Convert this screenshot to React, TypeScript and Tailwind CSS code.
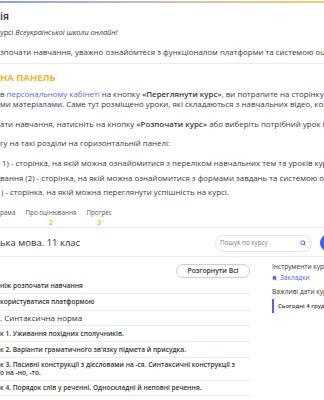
import React from "react";
import { Search, Bookmark } from "lucide-react";

const lessons = [
  { text: "ніж розпочати навчання", h: "py-[3.5px]" },
  { text: "користуватися платформою", h: "py-[4px]" },
];

const App = () => {
  return (
    <div className="w-[324px] h-[400px] overflow-hidden bg-white text-[#3a3a3a] font-['Open_Sans',sans-serif]">
      {/* Instruction card */}
      <div className="pt-px">
        <div className="h-[2px] bg-gradient-to-r from-[#8c9cf4] via-[#cdc2b8] to-[#f6cd70]" />
        <h1 className="mt-[6px] text-[10.5px] leading-[14px] font-semibold text-[#333] whitespace-nowrap">ія</h1>
        <p className="mt-[3.5px] text-[7.3px] leading-[10px] whitespace-nowrap">
          урсі <i>Всеукраїнської школи онлайн!</i>
        </p>
        <p className="mt-[10px] text-[7.9px] leading-[10px] whitespace-nowrap">
          зпочати навчання, уважно ознайомтеся з функціоналом платформи та системою оцінювання.
        </p>
        <div className="mt-[6.5px] border-t border-[#ececec]" />

        <h2 className="mt-[7.5px] text-[9.5px] leading-[12px] font-bold text-[#f3b52d] whitespace-nowrap">НА ПАНЕЛЬ</h2>

        <div className="mt-[5.5px] text-[7.9px] leading-[10px] whitespace-nowrap">
          <div>
            в <span className="text-[#5a63f0]">персональному кабінеті</span> на кнопку{" "}
            <span className="font-semibold">«Переглянути курс»</span>, ви потрапите на сторінку «Програма»
          </div>
          <div>ми матеріалами. Саме тут розміщено уроки, які складаються з навчальних відео, конспектів</div>
        </div>
        <div className="mt-[10px] text-[7.9px] leading-[10px] whitespace-nowrap">
          ати навчання, натисніть на кнопку <span className="font-semibold">«Розпочати курс»</span> або виберіть потрібний урок із навчальної програми.
        </div>
        <div className="mt-[8.5px] text-[7.9px] leading-[10px] whitespace-nowrap">
          гу на такі розділи на горизонтальній панелі:
        </div>
        <div className="mt-[10.5px] flex flex-col gap-[4.5px] text-[7.9px] leading-[10px] whitespace-nowrap">
          <div className="pl-[2px]">1) - сторінка, на якій можна ознайомитися з переліком навчальних тем та уроків курсу;</div>
          <div>вання (2) - сторінка, на якій можна ознайомитися з формами завдань та системою оцінювання;</div>
          <div className="pl-[1px]">) - сторінка, на якій можна переглянути успішність на курсі.</div>
        </div>

        {/* Tabs picture */}
        <div className="mt-[12px] flex gap-[10px] text-[6.3px] leading-[7px] text-[#555] border-b border-[#ededed] pb-[1px] whitespace-nowrap">
          <div className="flex flex-col items-center">
            <span>рама</span>
          </div>
          <div className="flex flex-col items-center">
            <span>Про оцінювання</span>
            <span className="mt-[2px] text-[7.5px] leading-[8px] font-semibold text-[#f3b52d]">2</span>
          </div>
          <div className="flex flex-col items-center">
            <span>Прогрес</span>
            <span className="mt-[2px] text-[7.5px] leading-[8px] font-semibold text-[#f3b52d]">3</span>
          </div>
        </div>
      </div>

      {/* Course page header */}
      <div className="w-[338px] mt-[6px] flex items-center gap-[8px] pb-[4px] border-b border-[#ececec]">
        <div className="flex-1 text-[9.5px] leading-[14px] text-[#333] whitespace-nowrap">ька мова. 11 клас</div>
        <div className="w-[97px] h-[17px] rounded-full border border-[#e3e3e3] flex items-center justify-between pl-[4px] pr-[5px]">
          <span className="text-[6.3px] text-[#777] whitespace-nowrap">Пошук по курсу</span>
          <Search className="w-[6px] h-[6px] text-[#3b5bfd]" strokeWidth={3.5} />
        </div>
        <div className="w-[18px] h-[18px] rounded-full bg-[#3b5bfd] shrink-0" />
      </div>

      {/* Course body */}
      <div className="flex gap-[22px]">
        <div className="w-[250px] shrink-0">
          <div className="flex justify-end pt-[7px]">
            <button className="w-[74px] h-[14px] rounded-full border border-[#cfcfcf] text-[6.8px] font-semibold text-[#333] whitespace-nowrap">
              Розгорнути Всі
            </button>
          </div>
          <div className="text-[6.6px] leading-[8px] font-semibold text-[#333] whitespace-nowrap">
            {lessons.map((l) => (
              <div key={l.text} className={`${l.h} border-b border-[#ededed]`}>
                {l.text}
              </div>
            ))}
            <div className="py-[3px] border-b border-[#ededed] text-[8px] font-medium">. Синтаксична норма</div>
            <div className="py-[3.5px] border-b border-[#ededed]">к 1. Уживання похідних сполучників.</div>
            <div className="py-[3.5px] border-b border-[#ededed]">к 2. Варіанти граматичного зв'язку підмета й присудка.</div>
            <div className="py-[3px] border-b border-[#ededed]">
              <div>к 3. Пасивні конструкції з дієсловами на -ся. Синтаксичні конструкції з</div>
              <div>о на -но, -то.</div>
            </div>
            <div className="py-[3px] border-b border-[#ededed]">к 4. Порядок слів у реченні. Односкладні й неповні речення.</div>
            <div className="py-[4px]">сумковий тест</div>
          </div>
        </div>

        <div className="pt-[6px] whitespace-nowrap text-[6.6px] leading-[8px] text-[#333]">
          <div>Інструменти курсу</div>
          <div className="mt-[3px] flex items-center gap-[3px] text-[#4f63f5]">
            <Bookmark className="w-[5px] h-[6px]" fill="#4f63f5" strokeWidth={2} />
            <span>Закладки</span>
          </div>
          <div className="mt-[6px]">Важливі дати курсу</div>
          <div className="mt-[3px] border-l-2 border-[#4f63f5] pl-[4px] py-[3px] text-[6px] font-semibold">
            Сьогодні 4 грудня
          </div>
        </div>
      </div>
    </div>
  );
};

export default App;
